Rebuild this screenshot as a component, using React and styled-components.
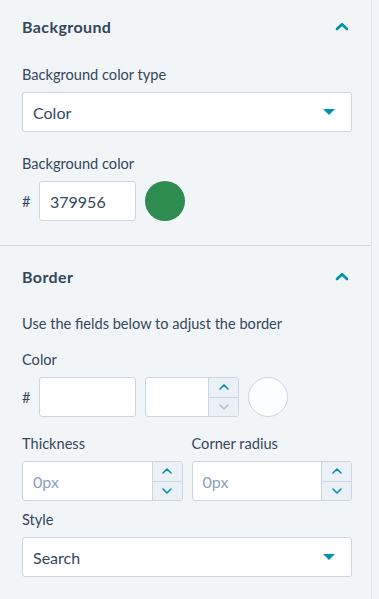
import React from 'react'
import styled, { createGlobalStyle } from 'styled-components'

const Global = createGlobalStyle`
  html, body {
    margin: 0;
    padding: 0;
    background: #f0f3f7;
  }
  body {
    font-family: Lato, "Open Sans", sans-serif;
    color: #33475b;
  }
`

const Panel = styled.div`
  width: 371px;
  height: 599px;
  background: #f2f5f8;
  border-right: 1px solid #e1e7ee;
  overflow: hidden;
`

const Section = styled.div`
  padding: ${p => p.top}px 19px 24px 22px;
  border-bottom: ${p => (p.divided ? '1px solid #cbd6e2' : 'none')};
`

const Header = styled.div`
  display: flex;
  align-items: center;
  justify-content: space-between;
  height: 22px;
  margin-bottom: ${p => p.gap}px;
`

const Heading = styled.h3`
  margin: 0;
  font-size: 16px;
  font-weight: 700;
  letter-spacing: 0.4px;
`

const Chevron = styled.svg`
  width: 14px;
  height: 9px;
  margin-right: 3px;
`

const Label = styled.div`
  font-size: 14.6px;
  line-height: 18px;
  margin-bottom: 8px;
`

const Help = styled.p`
  margin: 0 0 18px 0;
  font-size: 14.6px;
  line-height: 18px;
`

const Field = styled.div`
  margin-bottom: ${p => p.gap ?? 23}px;
`

const Select = styled.div`
  height: 40px;
  box-sizing: border-box;
  border: 1px solid #cbd6e2;
  border-radius: 3px;
  background: #fff;
  display: flex;
  align-items: center;
  justify-content: space-between;
  padding: 0 16px 0 10px;
  font-size: 16px;
`

const Caret = styled.span`
  width: 0;
  height: 0;
  border-left: 6px solid transparent;
  border-right: 6px solid transparent;
  border-top: 6px solid #0091ae;
`

const Row = styled.div`
  display: flex;
  align-items: center;
  gap: 9px;
`

const Hash = styled.span`
  width: 8px;
  font-size: 14.6px;
`

const TextBox = styled.div`
  width: ${p => p.w}px;
  height: 40px;
  box-sizing: border-box;
  border: 1px solid #cbd6e2;
  border-radius: 3px;
  background: #fff;
  display: flex;
  align-items: center;
  padding-left: 10px;
  font-size: 16px;
`

const Spin = styled.div`
  width: ${p => p.w};
  height: 40px;
  box-sizing: border-box;
  border: 1px solid #cbd6e2;
  border-radius: 3px;
  background: #fff;
  display: flex;
  overflow: hidden;
`

const SpinText = styled.div`
  flex: 1;
  display: flex;
  align-items: center;
  padding-left: 10px;
  font-size: 16px;
  color: #8aa1b9;
`

const SpinButtons = styled.div`
  width: 29px;
  border-left: 1px solid #cbd6e2;
  background: #eaf0f6;
  display: flex;
  flex-direction: column;
`

const SpinBtn = styled.div`
  flex: 1;
  display: flex;
  align-items: center;
  justify-content: center;
  border-top: ${p => (p.bottom ? '1px solid #cbd6e2' : 'none')};
  color: ${p => (p.disabled ? '#b0c1d4' : '#0091ae')};
`

const Swatch = styled.div`
  width: 40px;
  height: 40px;
  border-radius: 50%;
  box-sizing: border-box;
  background: ${p => p.color || '#fcfdfe'};
  border: ${p => (p.color ? 'none' : '1px solid #cbd6e2')};
`

const Grid = styled.div`
  display: grid;
  grid-template-columns: 1fr 1fr;
  column-gap: 9px;
  margin-bottom: 10px;
`

const Up = () => (
  <Chevron viewBox="0 0 14 9">
    <path d="M2 7 L7 2.2 L12 7" fill="none" stroke="#0091ae" strokeWidth="2.6" strokeLinecap="round" strokeLinejoin="round" />
  </Chevron>
)

const Arrow = ({ down }) => (
  <svg width="10" height="6" viewBox="0 0 10 6">
    <path d={down ? 'M1 1 L5 5 L9 1' : 'M1 5 L5 1 L9 5'} fill="none" stroke="currentColor" strokeWidth="1.6" strokeLinecap="round" strokeLinejoin="round" />
  </svg>
)

const Spinner = ({ w, value, downDisabled }) => (
  <Spin w={w}>
    <SpinText>{value}</SpinText>
    <SpinButtons>
      <SpinBtn><Arrow /></SpinBtn>
      <SpinBtn bottom disabled={downDisabled}><Arrow down /></SpinBtn>
    </SpinButtons>
  </Spin>
)

export default function App() {
  return (
    <>
      <Global />
      <Panel>
        <Section divided top={15}>
          <Header gap={29}>
            <Heading>Background</Heading>
            <Up />
          </Header>
          <Field>
            <Label>Background color type</Label>
            <Select>
              Color
              <Caret />
            </Select>
          </Field>
          <Field gap={0}>
            <Label>Background color</Label>
            <Row>
              <Hash>#</Hash>
              <TextBox w={97}>379956</TextBox>
              <Swatch color="#2e8c50" />
            </Row>
          </Field>
        </Section>
        <Section top={19}>
          <Header gap={28}>
            <Heading>Border</Heading>
            <Up />
          </Header>
          <Help>Use the fields below to adjust the border</Help>
          <Field gap={18}>
            <Label>Color</Label>
            <Row>
              <Hash>#</Hash>
              <TextBox w={97} />
              <Spinner w="94px" value="" downDisabled />
              <Swatch />
            </Row>
          </Field>
          <Grid>
            <div>
              <Label>Thickness</Label>
              <Spinner w="100%" value="0px" />
            </div>
            <div>
              <Label>Corner radius</Label>
              <Spinner w="100%" value="0px" />
            </div>
          </Grid>
          <Field gap={0}>
            <Label>Style</Label>
            <Select>
              Search
              <Caret />
            </Select>
          </Field>
        </Section>
      </Panel>
    </>
  )
}
